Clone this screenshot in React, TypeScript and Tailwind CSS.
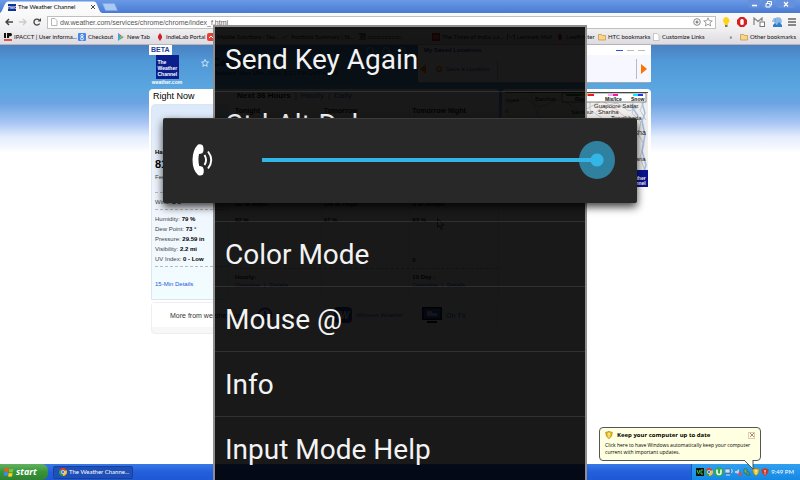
import React from "react";

const bookmarks = [
  { label: "IPACCT | User informa...", icon: "ip", width: "w-[74px]" },
  { label: "Checkout", icon: "google", width: "w-[39px]" },
  { label: "New Tab", icon: "play", width: "w-[39px]" },
  { label: "IndieLab Portal", icon: "drop", width: "w-[51px]" },
  { label: "Mobile Solutions › Tea...", icon: "red", width: "w-[74px]" },
  { label: "Portfolio Summary | St...", icon: "line", width: "w-[77px]" },
  { label: "□□□□□□□□□..", icon: "hindi", width: "w-[74px]" },
  { label: "The Times of India: La...", icon: "toi", width: "w-[75px]" },
  { label: "Lexmark Mail", icon: "mail", width: "w-[49px]" },
  { label: "LawPrinter", icon: "drop", width: "w-[42px]" },
  { label: "HTC bookmarks", icon: "folder", width: "w-[54px]" },
  { label: "Customize Links", icon: "page", width: "w-[54px]" },
];

const menuItems = [
  "Send Key Again",
  "Ctrl-Alt-Del",
  "Disconnect",
  "Color Mode",
  "Mouse @",
  "Info",
  "Input Mode Help",
];

const readings = [
  ["Humidity:", "79 %"],
  ["Dew Point:", "73 °"],
  ["Pressure:", "29.59 in"],
  ["Visibility:", "2.2 mi"],
  ["UV Index:", "0 - Low"],
];

const forecast = [
  { title: "Tonight", wind: "SE at 8mph", humidity: "82 %", uv: "", link: "Hourly:" },
  { title: "Tomorrow", wind: "SW at 7mph", humidity: "67 %", uv: "", link: "" },
  { title: "Tomorrow Night", wind: "S at 10mph", humidity: "83 %", uv: "0", link: "10 Day :" },
];

function BookmarkIcon({ kind }: { kind: string }) {
  return (
    <svg className="size-2 shrink-0" viewBox="0 0 8 8" aria-hidden="true">
      {kind === "ip" && (
        <>
          <path d="M0 0h2v5H0zM3 0h3.500q1.500 0 1.500 1.600T6.500 3.200H5V5H3z" fill="#111" />
          <path d="M0 6h8v2H0z" fill="#e05050" />
        </>
      )}
      {kind === "google" && (
        <>
          <rect width="8" height="8" rx="1" fill="#4a86e8" />
          <circle cx="4" cy="2.600" r="1.200" fill="none" stroke="#fff" strokeWidth=".9" />
          <circle cx="4" cy="5.600" r="1.400" fill="none" stroke="#fff" strokeWidth=".9" />
        </>
      )}
      {kind === "play" && (
        <>
          <path d="M1 0l4 3-4 2z" fill="#e8505b" />
          <path d="M1 0v8l3-4z" fill="#38a8e0" />
          <path d="M1 8l6-4-2-1z" fill="#57b65a" />
        </>
      )}
      {kind === "drop" && <path d="M4 0l2 3v2L4 8 2 5V3z" fill="#d2202a" />}
      {kind === "red" && (
        <>
          <rect width="8" height="8" rx="2" fill="#e8402f" />
          <path d="M2 5l2-2 2 2" stroke="#fff" fill="none" />
        </>
      )}
      {kind === "line" && <path d="M0 6l3-2 1 1 4-4" stroke="#b08b2c" fill="none" />}
      {kind === "hindi" && <path d="M0 1h8M2 1c3 0 2 3 0 3 3 0 2 3-1 3M5 1v6M7 1v6" stroke="#222" fill="none" strokeWidth=".9" />}
      {kind === "toi" && (
        <>
          <rect width="8" height="8" fill="#d81d1d" />
          <path d="M1 3h6M1 5h6" stroke="#fff" strokeWidth=".7" />
        </>
      )}
      {kind === "mail" && <path d="M.5 6.500v-5L4 4.500l3.500-3v5" stroke="#d33" fill="none" />}
      {kind === "folder" && (
        <path d="M.5 7V1.500h3l.7 1h3.300V7z" fill="#f7d58b" stroke="#c99a4b" strokeWidth=".8" />
      )}
      {kind === "page" && <path d="M1.500.5h3.500l2 2v5H1.500z" fill="#fff" stroke="#aaa" strokeWidth=".6" />}
    </svg>
  );
}

function TitleBar() {
  return (
    <header className="flex h-[13px] shrink-0 items-end bg-linear-to-b from-[#6a9ae6] to-[#4a7ad2] font-[Lato,sans-serif]">
      <div className="relative flex h-3 w-[102px] shrink-0 items-center pl-2">
        <svg className="absolute inset-0 h-full w-full" viewBox="0 0 102 12" preserveAspectRatio="none" aria-hidden="true">
          <path d="M0 12C3 11 4 1 8 .5H94c4 .5 4 10.500 8 11.500z" fill="#fafafa" />
        </svg>
        <span className="relative flex w-2 items-center justify-center bg-[#10309a] text-[4px] leading-[7px] font-bold text-white">TWC</span>
        <span className="relative ml-0.5 w-[73px] text-[6px] leading-[8px] text-black">The Weather Channel</span>
        <button type="button" aria-label="Close tab" className="relative">
          <svg className="size-1" viewBox="0 0 4 4"><path d="M0 0l4 4M4 0L0 4" stroke="#444" /></svg>
        </button>
      </div>
      <button type="button" aria-label="New tab" className="mb-0.5 h-2">
        <svg className="h-2 w-4" viewBox="0 0 16 8"><path d="M.5.500h12l3 7h-12z" fill="#a9c8f3" stroke="#7ea8e4" strokeWidth=".6" /></svg>
      </button>
      <div className="ml-auto flex items-center gap-0.5 self-start pr-1">
        <button type="button" aria-label="Minimize" className="h-2 w-3 rounded-b-sm bg-[#6490dc]">
          <svg className="h-2 w-3" viewBox="0 0 12 8"><path d="M4 5.500h5" stroke="#fff" strokeWidth="1.500" /></svg>
        </button>
        <button type="button" aria-label="Restore" className="h-2 w-3 rounded-b-sm bg-[#6490dc]">
          <svg className="h-2 w-3" viewBox="0 0 12 8"><path d="M4 3.500h4V7H4zM5.500 3.500v-2h4v3.500H8" stroke="#fff" fill="none" /></svg>
        </button>
        <button type="button" aria-label="Close" className="h-2 w-5 rounded-b-sm bg-[#6490dc]">
          <svg className="h-2 w-5" viewBox="0 0 20 8"><path d="M8 2l4 4.500M12 2L8 6.500" stroke="#fff" strokeWidth="1.200" /></svg>
        </button>
      </div>
    </header>
  );
}

function Toolbar() {
  return (
    <div className="flex h-[17px] shrink-0 items-center bg-linear-to-b from-[#fafafa] to-[#efeef0] pt-px pr-1">
      <nav className="flex w-[47px] shrink-0 items-center gap-1.5 pl-[5px]">
        <button type="button" aria-label="Back">
          <svg className="size-2" viewBox="0 0 8 8"><path d="M8 4H1.500M4 1L1 4l3 3" stroke="#444" strokeWidth="1.500" fill="none" /></svg>
        </button>
        <button type="button" aria-label="Forward">
          <svg className="size-2" viewBox="0 0 8 8"><path d="M0 4h6.500M4 1l3 3-3 3" stroke="#ccc" strokeWidth="1.400" fill="none" /></svg>
        </button>
        <button type="button" aria-label="Reload">
          <svg className="size-2" viewBox="0 0 8 8"><path d="M6.600 5.500A3 3 0 1 1 6.200 2" stroke="#444" strokeWidth="1.300" fill="none" /><path d="M8 0v3.500H4.500z" fill="#444" /></svg>
        </button>
      </nav>
      <div className="flex h-[13px] min-w-0 flex-1 items-center border border-[#c0c0c0] bg-white px-0.5">
        <svg className="h-2 w-2.5 shrink-0" viewBox="0 0 10 8"><path d="M1.500.5H5l2 2v5H1.500z" fill="#fff" stroke="#999" strokeWidth=".7" /></svg>
        <input
          type="text"
          readOnly
          aria-label="Address"
          value="dw.weather.com/services/chrome/chrome/index_f.html"
          className="h-[11px] min-w-0 flex-1 bg-transparent text-[7px] leading-[11px] text-[#555] outline-none"
        />
        <svg className="h-2.5 w-5 shrink-0" viewBox="0 0 20 10" aria-hidden="true">
          <circle cx="4" cy="5" r="3.300" fill="none" stroke="#888" />
          <circle cx="4" cy="5" r="1.500" fill="#888" />
          <path d="M15 .800l1.200 2.900 3.100.2-2.400 2 .8 3L15 7.300l-2.700 1.600.8-3-2.400-2 3.100-.2z" fill="#fff" stroke="#888" strokeWidth=".8" />
        </svg>
      </div>
      <div className="flex w-20 shrink-0 items-center justify-between pl-1.5">
        <svg className="h-2.5 w-2" viewBox="0 0 8 10"><path d="M4 0a3.500 3.500 0 0 1 2 6.300V8H2.500V6.300A3.500 3.500 0 0 1 4 0z" fill="#ffd417" /><path d="M3 8h2.500v2H3z" fill="#777" /></svg>
        <svg className="size-2.5" viewBox="0 0 10 10"><path d="M3 0h4l3 3v4l-3 3H3L0 7V3z" fill="#d91f1f" /><rect x="3.300" y="2" width="3.400" height="6" rx="1.500" fill="#fff" /></svg>
        <svg className="h-2.5 w-3" viewBox="0 0 12 10"><path d="M1 8V1l4 3.500L9 1v3" stroke="#888" strokeWidth="1.300" fill="none" /><rect x="7" y="5" width="4.500" height="4.500" fill="#fff" stroke="#777" /></svg>
        <svg className="size-2.5" viewBox="0 0 10 10"><circle cx="6" cy="4" r="3.800" fill="#8cb9e4" /><path d="M0 4h4M1 2h3" stroke="#5c9ad5" /><path d="M1 10V8l2-2 2 2 2-3 3 3v2z" fill="#2d7ccd" /></svg>
        <button type="button" aria-label="Menu"><svg className="size-2" viewBox="0 0 8 8"><path d="M0 1h8M0 4h8M0 7h8" stroke="#666" strokeWidth="1.500" /></svg></button>
      </div>
    </div>
  );
}

function BookmarksBar() {
  return (
    <nav className="flex h-[15px] shrink-0 items-center overflow-hidden border-b border-[#b5b3b8] bg-linear-to-b from-[#efeef0] to-[#dddbe0] px-1 font-[Lato,sans-serif] text-[6px] leading-[8px] whitespace-nowrap text-[#111]">
      {bookmarks.map((b) => (
        <a key={b.label} href="#" className={`flex shrink-0 items-center gap-0.5 ${b.width}`}>
          <BookmarkIcon kind={b.icon} />
          {b.label}
        </a>
      ))}
      <button type="button" aria-label="More bookmarks" className="mr-2 ml-auto">»</button>
      <a href="#" className="flex shrink-0 items-center gap-0.5">
        <BookmarkIcon kind="folder" />
        Other bookmarks
      </a>
    </nav>
  );
}

function SiteHeader() {
  return (
    <div className="flex h-10 items-start">
      <div className="flex w-9 shrink-0 flex-col items-center">
        <span className="self-start bg-white px-0.5 text-[7px] leading-[10px] font-bold text-[#1d3f94]">BETA</span>
        <span className="h-6 w-[23px] bg-[#0a1e8c] px-0.5 pt-1 text-[5px] leading-[6px] font-bold text-white">
          The Weather Channel
        </span>
        <span className="text-[5px] leading-[7px] font-bold text-white">weather.com</span>
      </div>
      <svg className="mt-3.5 ml-4 size-2 shrink-0" viewBox="0 0 8 8"><path d="M4 .500l1 2.400 2.500.2-1.900 1.700.6 2.600L4 6 1.800 7.400l.6-2.600L.5 3.100 3 2.900z" fill="none" stroke="#fff" strokeWidth=".7" /></svg>
      <div className="ml-1 flex-1 pt-3 whitespace-nowrap text-[#10253a]">
        <h1 className="text-[10px] leading-[12px] font-bold">Calcutta, IND</h1>
        <p className="text-[6px] leading-[8px]">Updated: Mon 10th, 2013, 9:23 PM GMT+0530</p>
      </div>
      <div className="flex gap-2 pt-0.5 pr-3">
        <span className="size-2 rounded-full border border-white/60" />
        <span className="size-2 rounded-full border border-white/60" />
        <span className="size-2 rounded-full border border-white/60" />
      </div>
      <section className="flex h-[38px] w-[233px] shrink-0 flex-col rounded-b-sm border-b border-[#a0a8b8] bg-white">
        <div className="flex h-2.5 items-center justify-between px-1.5">
          <h2 className="text-[6px] leading-[8px] font-bold text-[#1a3a90]">My Saved Locations</h2>
          <div className="flex gap-1">
            <span className="h-px w-[7px] bg-[#2458d8]" />
            <span className="h-px w-[7px] bg-[#bbb]" />
            <span className="h-px w-[7px] bg-[#bbb]" />
          </div>
        </div>
        <div className="flex flex-1 items-center bg-[#f7f7ff] pr-1 pl-0.5">
          <svg className="h-2.5 w-1.5" viewBox="0 0 6 10"><path d="M6 0v10L0 5z" fill="#ff7a00" /></svg>
          <a href="#" className="ml-2.5 flex w-[61px] items-center gap-1 text-[6px] leading-[8px] text-[#2a5bd0]">
            <svg className="size-1.5" viewBox="0 0 6 6"><circle cx="3" cy="3" r="3" fill="#ff7a00" /><path d="M1 3h4M3 1v4" stroke="#fff" /></svg>
            Save a Location
          </a>
          <span className="h-5 w-px bg-[#ccc]" />
          <span className="ml-auto h-5 w-px bg-[#bbb]" />
          <svg className="ml-1 h-2.5 w-1.5" viewBox="0 0 6 10"><path d="M0 0v10l6-5z" fill="#ff7200" /></svg>
        </div>
      </section>
    </div>
  );
}

function RightNow() {
  return (
    <section className="w-20 shrink-0 pl-0.5">
      <h2 className="h-[15px] pt-px pl-0.5 text-[9px] leading-[12px] text-black">Right Now</h2>
      <div className="h-[196px] rounded-t-sm border border-[#dce6f2] bg-linear-to-b from-[#dce9fa] via-[#f0f5fd] to-[#f2fdff] pl-[3px] text-[6px] leading-[10px] text-[#444]">
        <svg className="ml-1.5 h-10 w-8" viewBox="0 0 32 40" aria-hidden="true">
          <defs><radialGradient id="haze"><stop offset="0" stopColor="#b8c9a8" /><stop offset="1" stopColor="#dce9fa" stopOpacity="0" /></radialGradient></defs>
          <ellipse cx="12" cy="19" rx="14" ry="12" fill="url(#haze)" />
        </svg>
        <p className="mt-0.5 font-bold text-black">Haze</p>
        <p className="text-[11px] leading-[15px] font-bold text-black">81°</p>
        <p>Feels Like: 86°</p>
        <div className="mt-2.5 border-t border-dashed border-[#bbb]" />
        <p className="mt-1">Wind: <b className="text-black">S 5</b></p>
        <div className="mt-0.5 mb-1 border-t border-dashed border-[#bbb]" />
        {readings.map(([name, value]) => (
          <p key={name}>{name} <b className="text-black">{value}</b></p>
        ))}
        <div className="mt-0.5 border-t border-dashed border-[#bbb]" />
        <a href="#" className="mt-3 block text-[#1c56d8]">15-Min Details</a>
      </div>
    </section>
  );
}

function Forecast() {
  return (
    <section className="flex-1 pl-1">
      <h2 className="flex h-[15px] gap-1 pt-px pl-1 text-[8px] leading-[12px] text-[#2a56b8]">
        <b className="text-[#111]">Next 36 Hours</b>
        <span>|</span><a href="#">Hourly</a><span>|</span><a href="#">Daily</a>
      </h2>
      <div className="grid h-[196px] grid-cols-3 bg-[#f7f9fc] text-[6px] leading-[8px] text-[#222]">
        {forecast.map((f) => (
          <div key={f.title} className="border-r border-[#dde3ec] pl-0.5">
            <h3 className="pt-0.5 text-[7px] leading-[9px] font-bold">{f.title}</h3>
            <p className="mt-[85px] font-bold">{f.wind}</p>
            <p className="mt-2 font-bold">{f.humidity}</p>
            <p className="mt-8 h-2 font-bold">{f.uv}</p>
            <div className="mt-1 border-t border-dashed border-[#bbb]" />
            <p className="mt-1 h-2 font-bold">{f.link}</p>
            {f.link && (
              <p className="flex gap-1 text-[#1c56d8]"><a href="#">Overview</a><span>|</span><a href="#">Details</a></p>
            )}
          </div>
        ))}
      </div>
    </section>
  );
}

function RadarMap() {
  return (
    <section className="h-[101px] w-[149px] shrink-0 rounded-sm bg-white p-[3px]">
      <svg className="block h-full w-full" viewBox="505 92 143 95" preserveAspectRatio="none" aria-label="Radar map">
        <rect x="505" y="92" width="143" height="95" fill="#f0eeeb" />
        <path d="M505 104l20-6 14 9 22-8 20 13 20-11M530 92l8 24 20 10M590 92v18l12 8M628 96l6 9-2 8 9 9-3 12 6 10-4 14 5 12M636 98l8 4-4 8 6 10M599 99l10 6 8-2 12 8 10-4" fill="none" stroke="#c3c6cd" />
        <path d="M642 103l3 10-3 8 3 14-3 16 4 14-4 12M630 104l8 12" fill="none" stroke="#a3bce8" strokeWidth="1.500" />
        <path d="M596 112l8-6 12 3 10 9" fill="none" stroke="#e4bebe" />
        <g fontSize="6" fill="#222">
          <text x="505" y="102">nices</text>
          <text x="535" y="101">Bardhar</text>
          <text x="505" y="113">ri</text>
          <text x="571" y="114">Santipur</text>
          <text x="598" y="114">Shariha</text>
          <text x="594" y="108">Guapoore Sadar</text>
          <text x="611" y="120">Tengikhada</text>
          <text x="631" y="135" fontSize="7">Ilsha</text>
          <text x="628" y="161">Jibaria</text>
        </g>
        <rect x="562" y="93" width="84" height="9" fill="#fff" stroke="#555" strokeWidth=".7" />
        <path d="M566 95h15" stroke="#138a1c" strokeWidth="2" />
        <path d="M581 95h7" stroke="#f0a020" strokeWidth="2" />
        <path d="M588 95h6" stroke="#f01818" strokeWidth="2" />
        <path d="M608 95h5" stroke="#f7a6f0" strokeWidth="2" />
        <path d="M613 95h5" stroke="#f01ca0" strokeWidth="2" />
        <path d="M633 95h5" stroke="#19e6f2" strokeWidth="2" />
        <path d="M638 95h5" stroke="#1838f0" strokeWidth="2" />
        <g fontSize="5" fontWeight="bold" fill="#111">
          <text x="575" y="101">Rain</text>
          <text x="605" y="101">Mix/Ice</text>
          <text x="631" y="101">Snow</text>
        </g>
        <path d="M505 92h143" stroke="#222" strokeWidth="1.500" />
        <rect x="624" y="170" width="24" height="17" fill="#0a1690" />
        <g fontSize="5" fontWeight="bold" fill="#fff">
          <text x="626" y="175">The</text>
          <text x="626" y="180">Weather</text>
          <text x="626" y="185">Channel</text>
        </g>
      </svg>
    </section>
  );
}

function MoreLinks() {
  return (
    <footer className="mt-px ml-0.5 flex h-8 w-[346px] items-start rounded-sm border border-[#eee] bg-[#f7f7f7]">
      <div className="flex h-6 w-full items-center bg-white text-[7px] leading-[9px] whitespace-nowrap text-[#333]">
        <span className="w-[105px] pl-[18px]">More from weather.com:</span>
        <a href="#" className="flex w-[77px] items-center gap-1 text-[#2a5bd0]">
          <svg className="size-4" viewBox="0 0 16 16"><circle cx="8" cy="8" r="6.500" fill="none" stroke="#2a5bd0" strokeWidth="2" /><path d="M8 4v7M5 8l3 3 3-3" stroke="#2a5bd0" strokeWidth="2" fill="none" /></svg>
          <span className="text-[6px]">Podcasts</span>
        </a>
        <a href="#" className="flex w-[88px] items-center gap-1 text-[#2a5bd0]">
          <span className="flex h-4 w-[18px] items-center justify-center rounded-sm bg-[#1b4bb5] text-[10px] font-bold text-white italic">iW</span>
          <span className="text-[6px]">iWitness Weather</span>
        </a>
        <a href="#" className="flex items-center gap-1 text-[#2a5bd0]">
          <svg className="h-4 w-5" viewBox="0 0 20 16"><path d="M0 0h20v13H0z" fill="#111" /><path d="M1.500 1.500h17v10h-17z" fill="#2a5fd2" /><path d="M5 4h5v2h5v3H5z" fill="#c5d6ff" /><path d="M5 15h10" stroke="#111" strokeWidth="2" /></svg>
          <span>On TV</span>
        </a>
      </div>
    </footer>
  );
}

function Taskbar() {
  return (
    <div className="flex h-4 shrink-0 items-center bg-linear-to-b from-[#3a78e6] via-[#235fdc] to-[#2058d4] font-[Lato,sans-serif] text-white">
      <button type="button" className="flex h-4 w-12 shrink-0 items-center gap-0.5 rounded-r-md bg-linear-to-b from-[#62b35f] via-[#37943a] to-[#2f8232] pl-1 font-['Open_Sans',sans-serif] text-[9px] leading-[12px] font-bold text-white italic">
        <svg className="size-2.5 shrink-0" viewBox="0 0 10 10">
          <path d="M1 1.500q2-1.500 4 0L4.300 5q-2-1-4 0z" fill="#f0592b" />
          <path d="M5.500 1.800q2 1 4-.3L8.800 5q-2 1-4 0z" fill="#82c341" />
          <path d="M.2 5.600q2-1 4 0L3.500 9q-2-1-4 0z" fill="#3f8cf0" />
          <path d="M4.800 5.800q2 1 4 0L8 9.200q-2 1-4 0z" fill="#fcd116" />
        </svg>
        start
      </button>
      <button type="button" className="ml-[5px] flex h-[13px] w-20 shrink-0 items-center gap-0.5 rounded-xs border border-[#1743a0] bg-[#1e50b8] pl-[5px] text-[6px] leading-[8px] whitespace-nowrap">
        <ChromeIcon />
        The Weather Channe...
      </button>
      <div className="ml-auto flex h-4 w-[109px] items-center border-l border-[#0e5cb8] bg-linear-to-b from-[#2fa0f0] to-[#1488e4] pl-1">
        <div className="flex items-center gap-px">
          <svg className="size-2" viewBox="0 0 8 8"><path d="M0 0h8v8H0z" fill="#111" /><path d="M1 2l1.500 4L4 2M7 2H5v4h2" stroke="#2ecc40" fill="none" /></svg>
          <ChromeIcon />
          <svg className="size-2.5" viewBox="0 0 10 10"><circle cx="5" cy="5" r="4.800" fill="#2fa84f" /><path d="M3 2.500v3q0 2 2 2t2-2v-3" stroke="#fff" strokeWidth="1.500" fill="none" /></svg>
          <svg className="size-2" viewBox="0 0 8 8"><path d="M0 1h5v4H0z" fill="#cfe0f5" stroke="#456" strokeWidth=".6" /><path d="M1 7h4M6.500 1q1.500 2 0 4" stroke="#dde" fill="none" /></svg>
          <svg className="size-2" viewBox="0 0 8 8"><path d="M1 3h1.500L5 1v6L2.500 5H1z" fill="#c8ccd4" /><circle cx="6" cy="6" r="1.500" fill="none" stroke="#e44" /></svg>
          <svg className="size-2" viewBox="0 0 8 8"><path d="M1 1h3v3h2v2h1v1H4V5H1z" fill="#58bd50" stroke="#345" strokeWidth=".5" /></svg>
          <ShieldIcon color="#f3c21c" />
          <ShieldIcon color="#e02a2a" />
        </div>
        <span className="mr-1.5 ml-auto text-[6px] leading-[8px] whitespace-nowrap">9:49 PM</span>
      </div>
    </div>
  );
}

function ChromeIcon() {
  return (
    <svg className="size-2 shrink-0" viewBox="0 0 8 8" aria-hidden="true">
      <path d="M4 4L.5 2A4 4 0 0 1 7.500 2z" fill="#e33b2e" />
      <path d="M4 4l3.500-2A4 4 0 0 1 4 8z" fill="#fbc116" />
      <path d="M4 4v4A4 4 0 0 1 .5 2z" fill="#34a14f" />
      <circle cx="4" cy="4" r="1.700" fill="#3d7ff0" stroke="#fff" strokeWidth=".6" />
    </svg>
  );
}

function ShieldIcon({ color }: { color: string }) {
  return (
    <svg className="size-2 shrink-0" viewBox="0 0 8 8" aria-hidden="true">
      <path d="M4 .300q2 1 3.300 1Q7.500 6 4 7.700.5 6 .7 1.300 2 1.300 4 .300z" fill={color} stroke="#776a2a" strokeWidth=".5" />
      <path d="M4 2v2.500M4 5.300v1" stroke="#fff" />
    </svg>
  );
}

function UpdateBalloon() {
  return (
    <aside className="absolute right-[39px] bottom-[19px] h-[34px] w-[162px] rounded-sm border border-[#555] bg-[#ffffe1] px-[5px] pt-0.5 font-['Open_Sans',sans-serif] text-black">
      <div className="flex items-center gap-1">
        <ShieldIcon color="#f3c21c" />
        <h2 className="flex-1 text-[6px] leading-[10px] font-bold whitespace-nowrap">Keep your computer up to date</h2>
        <button type="button" aria-label="Close" className="flex size-[7px] items-center justify-center border border-[#d9ccba]">
          <svg className="size-1" viewBox="0 0 4 4"><path d="M0 0l4 4M4 0L0 4" stroke="#a06848" strokeWidth=".8" /></svg>
        </button>
      </div>
      <p className="mt-0.5 text-[5px] leading-[7px] whitespace-nowrap">
        Click here to have Windows automatically keep your computer<br />current with important updates.
      </p>
      <svg className="absolute top-8 right-1.5 h-2.5 w-2.5" viewBox="0 0 10 10" aria-hidden="true">
        <path d="M0 0l9 9V0" fill="#ffffe1" stroke="#444" strokeWidth=".9" />
      </svg>
    </aside>
  );
}

function OptionsMenu() {
  return (
    <div role="menu" className="absolute top-[25px] bottom-0 left-1/2 w-[374px] -translate-x-1/2 overflow-hidden border-2 border-b-0 border-[#8e8e8e] bg-black/90 bg-clip-padding font-[Roboto,sans-serif]">
      {menuItems.map((label) => (
        <button
          key={label}
          type="button"
          role="menuitem"
          className="flex h-[65px] w-full items-center border-b border-white/10 px-2.5 pt-px text-left text-[28px] leading-[36px] text-[#f3f3f3]"
        >
          {label}
        </button>
      ))}
    </div>
  );
}

function VolumeDialog() {
  return (
    <div role="dialog" aria-label="Call volume" className="absolute top-[118px] left-1/2 flex h-[85px] w-[474px] -translate-x-1/2 items-center rounded-xs border-t border-[#3c3c3c] bg-[#282828] pr-[22px] pb-0.5 pl-[29px] shadow-[0_4px_9px_rgba(0,0,0,0.75)]">
      <svg className="h-8 w-[22px] shrink-0" viewBox="0 0 22 32" aria-hidden="true">
        <path d="M6 .5Q9-.2 10.800 1.500Q12 4 11.300 7.500Q10.800 9.800 8.500 9.800L7 10Q5.800 16 7.200 22L9 22.200Q11.300 22.400 11.600 25Q12.200 29 10.800 30.800Q8.500 32.200 6 31Q.6 26 .5 16Q.6 6 6 .5z" fill="#fff" />
        <path d="M12.500 11Q15.600 16 12.500 21M16 7.500Q22.500 16 16 24.500" stroke="#fff" strokeWidth="1.900" fill="none" />
      </svg>
      <input
        type="range"
        min="0"
        max="7"
        defaultValue="7"
        aria-label="Call volume"
        className="ml-12 h-[38px] min-w-0 flex-1 appearance-none bg-transparent bg-[linear-gradient(#33b5e5,#33b5e5)] bg-[length:calc(100%-18px)_4px] bg-left bg-no-repeat [&::-webkit-slider-thumb]:h-[38px] [&::-webkit-slider-thumb]:w-9 [&::-webkit-slider-thumb]:appearance-none [&::-webkit-slider-thumb]:rounded-[50%] [&::-webkit-slider-thumb]:bg-[linear-gradient(#33b5e5,#33b5e5),radial-gradient(circle,#33b5e5_6px,#2f819f_7px)] [&::-webkit-slider-thumb]:bg-[length:18px_4px,100%_100%] [&::-webkit-slider-thumb]:bg-[position:left_center,center] [&::-webkit-slider-thumb]:bg-no-repeat"
      />
    </div>
  );
}

export default function App() {
  return (
    <div className="relative flex h-screen flex-col overflow-hidden bg-white font-['Liberation_Sans',Arial,sans-serif]">
      <TitleBar />
      <Toolbar />
      <BookmarksBar />
      <main className="min-h-0 flex-1 overflow-hidden bg-[linear-gradient(#4a80c2_0px,#4f97d6_16px,#5aa6e0_42px,#6ba4e2_58px,#a9c6f5_78px,#e3edfc_92px,#ffffff_108px)]">
        <div className="mx-auto w-[502px]">
          <SiteHeader />
          <div className="mt-1 flex items-start justify-between">
            <div className="flex h-[212px] w-[350px] rounded-sm bg-white">
              <RightNow />
              <Forecast />
            </div>
            <RadarMap />
          </div>
          <MoreLinks />
        </div>
      </main>
      <Taskbar />
      <svg className="absolute top-[218px] left-[437px] h-3 w-2" viewBox="0 0 8 12" aria-hidden="true">
        <path d="M.5.500v9l2-2 1.500 4 1.500-.7L4 7h3z" fill="#fff" stroke="#000" strokeWidth=".6" />
      </svg>
      <UpdateBalloon />
      <OptionsMenu />
      <VolumeDialog />
    </div>
  );
}
